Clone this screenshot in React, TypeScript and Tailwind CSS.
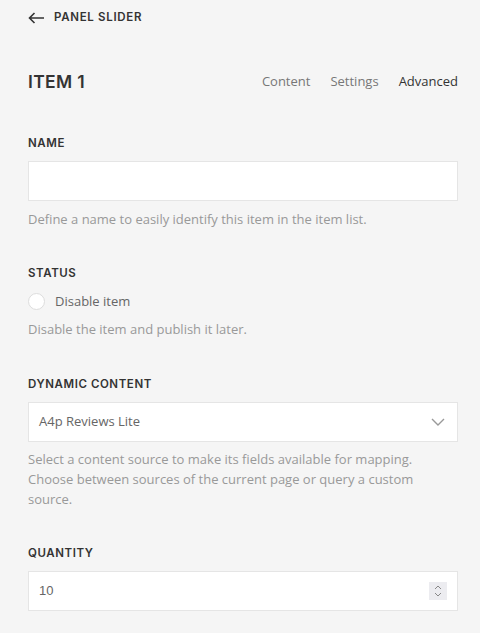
import React from 'react';

const headingFont = { fontFamily: '"Inter", "Noto Sans", sans-serif' };

const Label: React.FC<{ children: React.ReactNode }> = ({ children }) => (
  <h3 className="text-[11.5px] font-semibold uppercase text-[#333] tracking-[0.05em] leading-[16px]" style={headingFont}>
    {children}
  </h3>
);

const Help: React.FC<{ children: React.ReactNode }> = ({ children }) => (
  <p className="text-[13px] leading-[20px] text-[#999]">{children}</p>
);

export default function App() {
  return (
    <div className="min-h-[633px] w-[480px] bg-[#f5f5f5] pl-[28px] pr-[22px] pt-[1px]" style={{ fontFamily: '"Open Sans", sans-serif' }}>
      <div className="flex h-[33px] items-center gap-[9px] pt-[1px]">
        <svg width="17" height="12" viewBox="0 0 17 12" fill="none" stroke="#333" strokeWidth="1.6">
          <path d="M16 6H1.5M6.5 1L1.5 6l5 5" />
        </svg>
        <span className="text-[11.5px] font-semibold uppercase text-[#333] tracking-[0.06em]" style={headingFont}>
          Panel Slider
        </span>
      </div>

      <div className="mt-[35px] flex h-[26px] items-center justify-between">
        <h2 className="text-[17.5px] font-semibold uppercase text-[#333] tracking-[0.02em]" style={headingFont}>
          Item 1
        </h2>
        <nav className="flex gap-[20px] text-[13px]">
          <span className="text-[#777]">Content</span>
          <span className="text-[#777]">Settings</span>
          <span className="text-[#333]">Advanced</span>
        </nav>
      </div>

      <div className="mt-[40px]">
        <Label>Name</Label>
        <div className="mt-[10px] h-[40px] border border-[#e5e5e5] bg-white" />
        <div className="mt-[8px]">
          <Help>Define a name to easily identify this item in the item list.</Help>
        </div>
      </div>

      <div className="mt-[36px]">
        <Label>Status</Label>
        <label className="mt-[11px] flex items-center gap-[10px]">
          <span className="h-[17px] w-[17px] rounded-full border border-[#ddd] bg-white" />
          <span className="text-[13px] text-[#666]">Disable item</span>
        </label>
        <div className="mt-[7px]">
          <Help>Disable the item and publish it later.</Help>
        </div>
      </div>

      <div className="mt-[37px]">
        <Label>Dynamic Content</Label>
        <div className="mt-[10px] flex h-[40px] items-center justify-between border border-[#e5e5e5] bg-white pl-[10px] pr-[12px]">
          <span className="text-[13px] text-[#666]">A4p Reviews Lite</span>
          <svg width="14" height="8" viewBox="0 0 14 8" fill="none" stroke="#999" strokeWidth="1.4">
            <path d="M1 1l6 6 6-6" />
          </svg>
        </div>
        <div className="mt-[7px]">
          <Help>
            Select a content source to make its fields available for mapping. Choose between sources of the current page or
            query a custom source.
          </Help>
        </div>
      </div>

      <div className="mt-[36px]">
        <Label>Quantity</Label>
        <div className="mt-[10px] flex h-[40px] items-center justify-between border border-[#e5e5e5] bg-white pl-[10px] pr-[10px]">
          <span className="text-[13px] text-[#666]" style={{ fontFamily: '"Liberation Sans", sans-serif' }}>10</span>
          <div className="flex h-[18px] w-[18px] items-center justify-center bg-[#ececf0]">
            <svg width="8" height="14" viewBox="0 0 8 14" fill="none" stroke="#888" strokeWidth="1">
              <path d="M1 5l3-3 3 3M1 9l3 3 3-3" />
            </svg>
          </div>
        </div>
      </div>
    </div>
  );
}
